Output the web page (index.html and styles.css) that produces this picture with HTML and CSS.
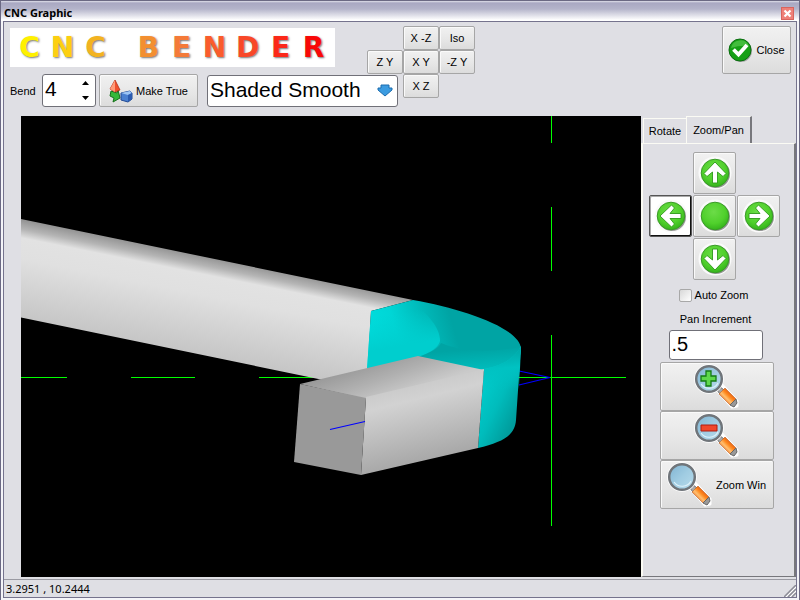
FILE: index.html
```html
<!DOCTYPE html>
<html lang="en">
<head>
<meta charset="utf-8">
<title>CNC Graphic</title>
<link rel="stylesheet" href="styles.css">
</head>
<body>
<svg class="defs" aria-hidden="true">
  <defs>
    <radialGradient id="ball" cx="0.45" cy="0.35" r="0.7">
      <stop offset="0" stop-color="#6cdc48"/>
      <stop offset="0.6" stop-color="#50d02c"/>
      <stop offset="1" stop-color="#2fae18"/>
    </radialGradient>
    <linearGradient id="lens" x1="0" y1="0" x2="1" y2="1">
      <stop offset="0" stop-color="#7fb3d2"/>
      <stop offset="0.5" stop-color="#a0cce2"/>
      <stop offset="1" stop-color="#b8dcec"/>
    </linearGradient>
    <linearGradient id="grip" x1="0" y1="1" x2="1" y2="0">
      <stop offset="0.2" stop-color="#e8560c"/>
      <stop offset="0.42" stop-color="#ffc070"/>
      <stop offset="0.55" stop-color="#ff8a20"/>
      <stop offset="0.8" stop-color="#d8480a"/>
    </linearGradient>
    <symbol id="disc" viewBox="0 0 34 34">
      <circle cx="17" cy="17" r="16.500" fill="#fafafa"/>
      <circle cx="18" cy="18" r="14" fill="#555" opacity="0.6"/>
      <circle cx="17" cy="17" r="13.800" fill="url(#ball)" stroke="#3a9a28"/>
    </symbol>
    <symbol id="arrow" viewBox="0 0 34 34">
      <path d="M17 6 L28 17.500 L25 20.500 L19.500 16 V27 H14.500 V16 L9 20.500 L6 17.500 Z" fill="#fff" stroke="#2c9a18" stroke-width="0.900"/>
    </symbol>
    <symbol id="magnifier" viewBox="0 0 46 46">
      <path d="M23 26 L28 21 L43 37 V42 L38 43 Z" fill="#fff" stroke="#fff" stroke-width="3" stroke-linejoin="round"/>
      <path d="M22 25 L25 22 L30 26 L26 30 Z" fill="#a8a8a8" stroke="#707070"/>
      <path d="M25 30 L31 24 L42 35 L36 41 Z" fill="url(#grip)" stroke="#b8622c" stroke-width="0.600"/>
      <path d="M36 41 L42 35 L43 39 L40 43 Z" fill="#999" stroke="#666"/>
      <circle cx="15" cy="15" r="14.800" fill="#fff"/>
      <circle cx="15" cy="15" r="12.800" fill="url(#lens)" stroke="#70757a" stroke-width="2.500"/>
      <path d="M7 20 A10 10 0 0 0 24 19" fill="none" stroke="#e0f2fa" stroke-width="1.200"/>
    </symbol>
  </defs>
</svg>
<div class="window">
  <header class="titlebar">
    <h1>CNC Graphic</h1>
    <button class="win-close" aria-label="Close window">
      <svg width="13" height="13" viewBox="0 0 13 13"><path d="M3.500 3.500 L9.500 9.500 M9.500 3.500 L3.500 9.500" stroke="#fff" stroke-width="2.200"/></svg>
    </button>
  </header>
  <div class="client">
    <div class="toolbar">
      <div class="logo">
        <span class="c1">C</span><span class="c2">N</span><span class="c3">C</span>
        <span class="c4 word">B</span><span class="c5">E</span><span class="c6">N</span><span class="c7">D</span><span class="c8">E</span><span class="c9">R</span>
      </div>
      <form class="fields">
        <label for="bend">Bend</label>
        <div class="spin">
          <input id="bend" type="text" value="4">
          <div class="steps">
            <button type="button" aria-label="Next bend"><svg width="7" height="4" viewBox="0 0 7 4"><path d="M0 4 L3.500 0 L7 4 Z"/></svg></button>
            <button type="button" aria-label="Previous bend"><svg width="7" height="4" viewBox="0 0 7 4"><path d="M0 0 L3.500 4 L7 0 Z"/></svg></button>
          </div>
        </div>
        <button type="button" class="btn make">
          <svg width="24" height="24" viewBox="0 0 24 24">
            <path d="M2 12 L8 14 L9 11 L11 19 L4 23 L5 19 L1 17 Z" fill="#35b83a" stroke="#16701c"/>
            <path d="M6 1 L11 11 L6 13 L1 10 Z" fill="#f0502c" stroke="#b02c14" stroke-width="0.800"/>
            <path d="M6 1 L6 13 L1 10 Z" fill="#ff9a78"/>
            <path d="M12 14 L21 12 L23 14 V20 L19 23 L12 21 Z" fill="#4a80d0" stroke="#234a94"/>
            <path d="M12 14 L21 12 L23 14 L19 16 Z" fill="#9cc4f4"/>
            <path d="M19 16 L23 14 V20 L19 23 Z" fill="#2c5cb0"/>
          </svg>
          <span>Make True</span>
        </button>
        <div class="combo">
          <select aria-label="Shading"><option>Shaded Smooth</option></select>
          <svg width="16" height="13" viewBox="0 0 16 13"><path d="M4 1 H12 V4 H15 V6 L8 12 L1 6 V4 H4 Z" fill="#3b9be0" stroke="#1c6cae"/></svg>
        </div>
      </form>
      <button class="btn v-xnz">X -Z</button>
      <button class="btn v-iso">Iso</button>
      <button class="btn v-zy">Z Y</button>
      <button class="btn v-xy">X Y</button>
      <button class="btn v-nzy">-Z Y</button>
      <button class="btn v-xz">X Z</button>
      <button class="btn close">
        <svg width="25" height="25" viewBox="0 0 25 25">
          <circle cx="13" cy="13" r="11" fill="#777" opacity="0.6"/>
          <circle cx="12" cy="12" r="11" fill="#16a016" stroke="#0b6e10"/>
          <path d="M3 10 A9.500 9.500 0 0 1 21 8 Q12 7 3 10 Z" fill="#62d058" opacity="0.6"/>
          <path d="M5.500 11.500 L10.500 16.500 L19 7" fill="none" stroke="#fff" stroke-width="3.800"/>
        </svg>
        <span>Close</span>
      </button>
    </div>
    <div class="workspace">
      <svg class="viewport" viewBox="21 116 620 461" role="img" aria-label="Bent bar">
        <defs>
          <linearGradient id="bar" gradientUnits="userSpaceOnUse" x1="21" y1="219" x2="2" y2="314">
            <stop offset="0" stop-color="#929292"/><stop offset="0.1" stop-color="#b4b4b4"/><stop offset="0.19" stop-color="#e2e2e2"/><stop offset="0.4" stop-color="#e0e0e0"/><stop offset="1" stop-color="#c6c6c6"/>
          </linearGradient>
          <linearGradient id="top" gradientUnits="userSpaceOnUse" x1="400" y1="350" x2="414" y2="390">
            <stop offset="0" stop-color="#999"/><stop offset="0.5" stop-color="#b0b0b0"/><stop offset="1" stop-color="#cacaca"/>
          </linearGradient>
          <linearGradient id="side" gradientUnits="userSpaceOnUse" x1="424" y1="380" x2="444" y2="462">
            <stop offset="0" stop-color="#cacaca"/><stop offset="0.2" stop-color="#d2d2d2"/><stop offset="1" stop-color="#a4a4a4"/>
          </linearGradient>
          <linearGradient id="ctop" gradientUnits="userSpaceOnUse" x1="375" y1="345" x2="452" y2="322">
            <stop offset="0" stop-color="#00dcdc"/><stop offset="0.3" stop-color="#00d6d6"/><stop offset="0.7" stop-color="#00b8b8"/><stop offset="1" stop-color="#00a4a4"/>
          </linearGradient>
          <linearGradient id="cin" gradientUnits="userSpaceOnUse" x1="405" y1="312" x2="410" y2="345">
            <stop offset="0" stop-color="#00d0d0" stop-opacity="0"/><stop offset="1" stop-color="#00cece"/>
          </linearGradient>
          <linearGradient id="cout" gradientUnits="userSpaceOnUse" x1="482" y1="385" x2="522" y2="405">
            <stop offset="0" stop-color="#00cccc"/><stop offset="0.5" stop-color="#00bcbc"/><stop offset="1" stop-color="#009e9e"/>
          </linearGradient>
          <linearGradient id="crim" gradientUnits="userSpaceOnUse" x1="490" y1="348" x2="492" y2="376">
            <stop offset="0" stop-color="#00a4a4"/><stop offset="1" stop-color="#00c4c4"/>
          </linearGradient>
          <linearGradient id="crimfade" gradientUnits="userSpaceOnUse" x1="500" y1="350" x2="502" y2="390">
            <stop offset="0" stop-color="#00a8a8"/><stop offset="0.45" stop-color="#00c2c2"/><stop offset="1" stop-color="#00c2c2" stop-opacity="0"/>
          </linearGradient>
        </defs>
        <g stroke="#0f0" shape-rendering="crispEdges">
          <path d="M551.500 116 V143 M551.500 207 V271 M551.500 335 V526"/>
          <path d="M21 377.500 H67 M131 377.500 H195 M259 377.500 H345 M515 377.500 H626"/>
        </g>
        <path d="M519 371 L550 377.500 L519 385" fill="none" stroke="#00f" stroke-width="1.200"/>
        <path d="M21 219 L413 300 L371 311 L367 389 L21 317.500 Z" fill="url(#bar)"/>
        <path d="M371 311 L413 300 C465 309 521 329 521 349 L518 368 L484 371 L418 357 L367 370 Z" fill="url(#ctop)"/>
        <path d="M371 311 L413 302 C428 314 440 328 440 341 Q438 350 418 357 L367 370 Z" fill="url(#cin)"/>
        <path d="M418 357 Q438 350 441 343 Q470 356 521 347 L518 372 L484 371 Z" fill="url(#crim)"/>
        <path d="M484 369 Q512 364 521 346 L516 420 C515 436 502 442 478 448 Z" fill="url(#cout)"/>
        <path d="M484 369 Q512 364 521 346 L519 392 L482 392 Z" fill="url(#crimfade)"/>
        <path d="M300 384 L418 356 L484 370 L366 399 Z" fill="url(#top)"/>
        <path d="M366 397 L484 369 L478 448 L361 475 Z" fill="url(#side)"/>
        <path d="M300 384 L366 398 L361 475 L294 462 Z" fill="#999"/>
        <path d="M330 429.500 L365 421.500" stroke="#00f" stroke-width="1.200"/>
      </svg>
      <aside class="panel">
        <div class="tabs" role="tablist">
          <button class="tab" role="tab">Rotate</button>
          <button class="tab active" role="tab" aria-selected="true">Zoom/Pan</button>
        </div>
        <div class="page" role="tabpanel">
          <div class="pad">
            <button class="btn up" aria-label="Pan up"><svg width="34" height="34"><use href="#disc"/><use href="#arrow"/></svg></button>
            <button class="btn left" aria-label="Pan left"><svg width="34" height="34" viewBox="0 0 34 34"><use href="#disc"/><g transform="rotate(-90 17 17)"><use href="#arrow"/></g></svg></button>
            <button class="btn mid" aria-label="Center"><svg width="34" height="34"><use href="#disc"/></svg></button>
            <button class="btn right" aria-label="Pan right"><svg width="34" height="34" viewBox="0 0 34 34"><use href="#disc"/><g transform="rotate(90 17 17)"><use href="#arrow"/></g></svg></button>
            <button class="btn down" aria-label="Pan down"><svg width="34" height="34" viewBox="0 0 34 34"><use href="#disc"/><g transform="rotate(180 17 17)"><use href="#arrow"/></g></svg></button>
          </div>
          <label class="auto"><input type="checkbox"><span>Auto Zoom</span></label>
          <label class="inc" for="inc">Pan Increment</label>
          <input class="box" id="inc" type="text" value=".5">
          <div class="zooms">
            <button class="btn" aria-label="Zoom in">
              <svg width="46" height="46" viewBox="0 0 46 46"><use href="#magnifier"/><path d="M12 7 H17 V12 H22 V17 H17 V22 H12 V17 H7 V12 H12 Z" fill="#5ed84c" stroke="#157a14" stroke-width="1.300"/></svg>
            </button>
            <button class="btn" aria-label="Zoom out">
              <svg width="46" height="46" viewBox="0 0 46 46"><use href="#magnifier"/><path d="M7 12 H23 V18 H7 Z" fill="#f0482c" stroke="#b01c10"/></svg>
            </button>
            <button class="btn">
              <svg width="46" height="46" viewBox="0 0 46 46"><use href="#magnifier"/></svg>
              <span>Zoom Win</span>
            </button>
          </div>
        </div>
      </aside>
    </div>
    <footer class="status">
      <span>3.2951 , 10.2444</span>
      <svg width="12" height="12" viewBox="0 0 12 12"><path d="M0 12 L12 0 M4 12 L12 4 M8 12 L12 8" stroke="#8c8c96" stroke-width="1.500"/><path d="M2 12 L12 2 M6 12 L12 6" stroke="#fff"/></svg>
    </footer>
  </div>
</div>
</body>
</html>
```
FILE: styles.css
```css
* {
  box-sizing: border-box;
}

body {
  margin: 0;
  font: 11px/14px "Liberation Sans", sans-serif;
  color: #000;
}

button,
input,
select {
  font: inherit;
  color: inherit;
  margin: 0;
  padding: 0;
}

svg {
  display: block;
  flex: none;
}

.defs {
  position: absolute;
  width: 0;
  height: 0;
}

.window {
  display: flex;
  flex-direction: column;
  min-height: 100vh;
  padding: 0 2px 2px;
  border: 1px solid #6b6983;
  background: #f4f4f8;
}

.titlebar {
  display: flex;
  align-items: center;
  justify-content: space-between;
  height: 20px;
  margin: 0 -2px;
  padding: 4px 5px 0 3px;
  background: linear-gradient(#e0e0ea 0, #a9a8c2 2px, #b4b4ca 8px, #fff 19px);
}

.titlebar h1 {
  margin: 0;
  font: bold 11px/14px "Noto Sans", sans-serif;
}

.win-close {
  padding: 0;
  border: 0;
  background: #ee8078;
  box-shadow: inset 0 0 0 1px #d8645e;
}

.client {
  flex: 1;
  display: flex;
  flex-direction: column;
  border: 1px solid #75738d;
  background: #dfdfe4;
}

.btn {
  display: flex;
  align-items: center;
  justify-content: center;
  border: 1px solid #a6a6a6;
  border-radius: 2px;
  background: linear-gradient(#f1f1f1, #e6e6e6 60%, #dcdcdc);
  box-shadow: inset 1px 1px 0 #fafafa;
}

.toolbar {
  display: grid;
  grid-template-columns: 357px repeat(3, 36px) 1fr auto;
  grid-template-rows: repeat(3, 24px) 18px;
  padding: 4px 5px 0 6px;
}

.logo {
  grid-area: 1 / 1 / 3 / 2;
  display: flex;
  align-items: center;
  width: 325px;
  height: 39px;
  margin-top: 2px;
  padding-left: 3px;
  background: #fff;
  font: bold 28px/39px "DejaVu Sans", sans-serif;
  text-shadow: 1px 1px 2px #777;
}

.logo span {
  width: 33px;
  text-align: center;
}

.logo .word {
  margin-left: 20px;
}

.c1 { color: #fff000; }
.c2 { color: #fdcf10; }
.c3 { color: #f3b320; }
.c4 { color: #f38f30; }
.c5 { color: #f47a38; }
.c6 { color: #fa5c2c; }
.c7 { color: #f84828; }
.c8 { color: #fb2818; }
.c9 { color: #f80808; }

.fields {
  grid-area: 3 / 1 / 5 / 3;
  display: flex;
  align-items: center;
  align-self: start;
  height: 33px;
}

.fields label {
  width: 32px;
}

.spin,
.combo,
.box {
  border: 1px solid #707078;
  border-radius: 3px;
  background: #fff;
}

.spin {
  display: flex;
  width: 54px;
  height: 33px;
  margin-right: 3px;
}

.spin input {
  flex: 1;
  min-width: 0;
  padding: 0 0 3px 2px;
  border: 0;
  background: none;
  font-size: 21px;
}

.steps {
  display: flex;
  flex-direction: column;
  align-items: center;
  justify-content: center;
  gap: 11px;
  width: 20px;
}

.steps button {
  border: 0;
  background: none;
}

.make {
  gap: 3px;
  width: 99px;
  height: 33px;
  margin-right: 9px;
}

.combo {
  display: flex;
  align-items: center;
  width: 191px;
  height: 32px;
  padding-right: 4px;
}

.combo select {
  flex: 1;
  min-width: 0;
  padding: 0 0 2px 2px;
  border: 0;
  background: none;
  appearance: none;
  font-size: 21px;
  line-height: 26px;
}

.v-xnz { grid-area: 1 / 3; }
.v-iso { grid-area: 1 / 4; }
.v-zy { grid-area: 2 / 2; }
.v-xy { grid-area: 2 / 3; }
.v-nzy { grid-area: 2 / 4; }
.v-xz { grid-area: 3 / 3; }

.close {
  grid-area: 1 / 6 / 4 / 7;
  align-self: start;
  gap: 3px;
  width: 69px;
  height: 48px;
}

.workspace {
  flex: 1;
  display: flex;
  min-height: 0;
}

.viewport {
  flex: 1;
  min-width: 0;
  margin-left: 17px;
  background: #000;
}

.panel {
  display: flex;
  flex-direction: column;
  width: 155px;
}

.tabs {
  display: flex;
  align-items: flex-end;
  height: 27px;
  padding-left: 2px;
}

.tab {
  width: 43px;
  height: 25px;
  border: 1px solid #fbfbf4;
  border-bottom: 0;
  border-right: 0;
  background: none;
}

.tab.active {
  width: 66px;
  height: 28px;
  margin-bottom: -1px;
  padding-bottom: 2px;
  border-right: 2px solid #77777c;
  background: #dfdfe4;
}

.page {
  flex: 1;
  display: flex;
  flex-direction: column;
  align-items: center;
  padding: 8px 6px 8px 0;
  border: 1px solid #fbfbf4;
  border-left-width: 2px;
  border-right: 2px solid #77777c;
  border-bottom: 1px solid #77777c;
}

.pad {
  display: grid;
  grid-template-columns: repeat(3, 43px);
  grid-template-rows: repeat(3, 42px);
  gap: 1px;
  margin-right: 2px;
}

.up { grid-area: 1 / 2; }
.left { grid-area: 2 / 1; }
.mid { grid-area: 2 / 2; }
.right { grid-area: 2 / 3; }
.down { grid-area: 3 / 2; }

.left {
  border-color: #555;
  background: #fff;
  box-shadow: inset -1px -1px 0 #111, inset 1px 1px 0 #aaa;
}

.auto {
  display: flex;
  align-items: center;
  gap: 3px;
  margin-top: 8px;
  margin-right: 4px;
}

.auto input {
  width: 13px;
  height: 13px;
  appearance: none;
  border: 1px solid #a8a8a8;
  border-radius: 2px;
  background: linear-gradient(135deg, #d8d8d8, #fff);
}

.inc {
  margin-top: 10px;
}

.box {
  width: 94px;
  height: 30px;
  margin: 4px 0 2px;
  padding: 0 2px 2px;
  font-size: 20px;
}

.zooms {
  display: flex;
  flex-direction: column;
  margin-left: 2px;
}

.zooms .btn {
  width: 114px;
  height: 49px;
  gap: 3px;
}

.status {
  display: flex;
  align-items: center;
  justify-content: space-between;
  height: 18px;
  margin-top: 2px;
  padding-left: 2px;
  border-top: 1px solid #9a9aa2;
  font: 11px/14px "Noto Sans", sans-serif;
}

.status svg {
  align-self: flex-end;
}
```
